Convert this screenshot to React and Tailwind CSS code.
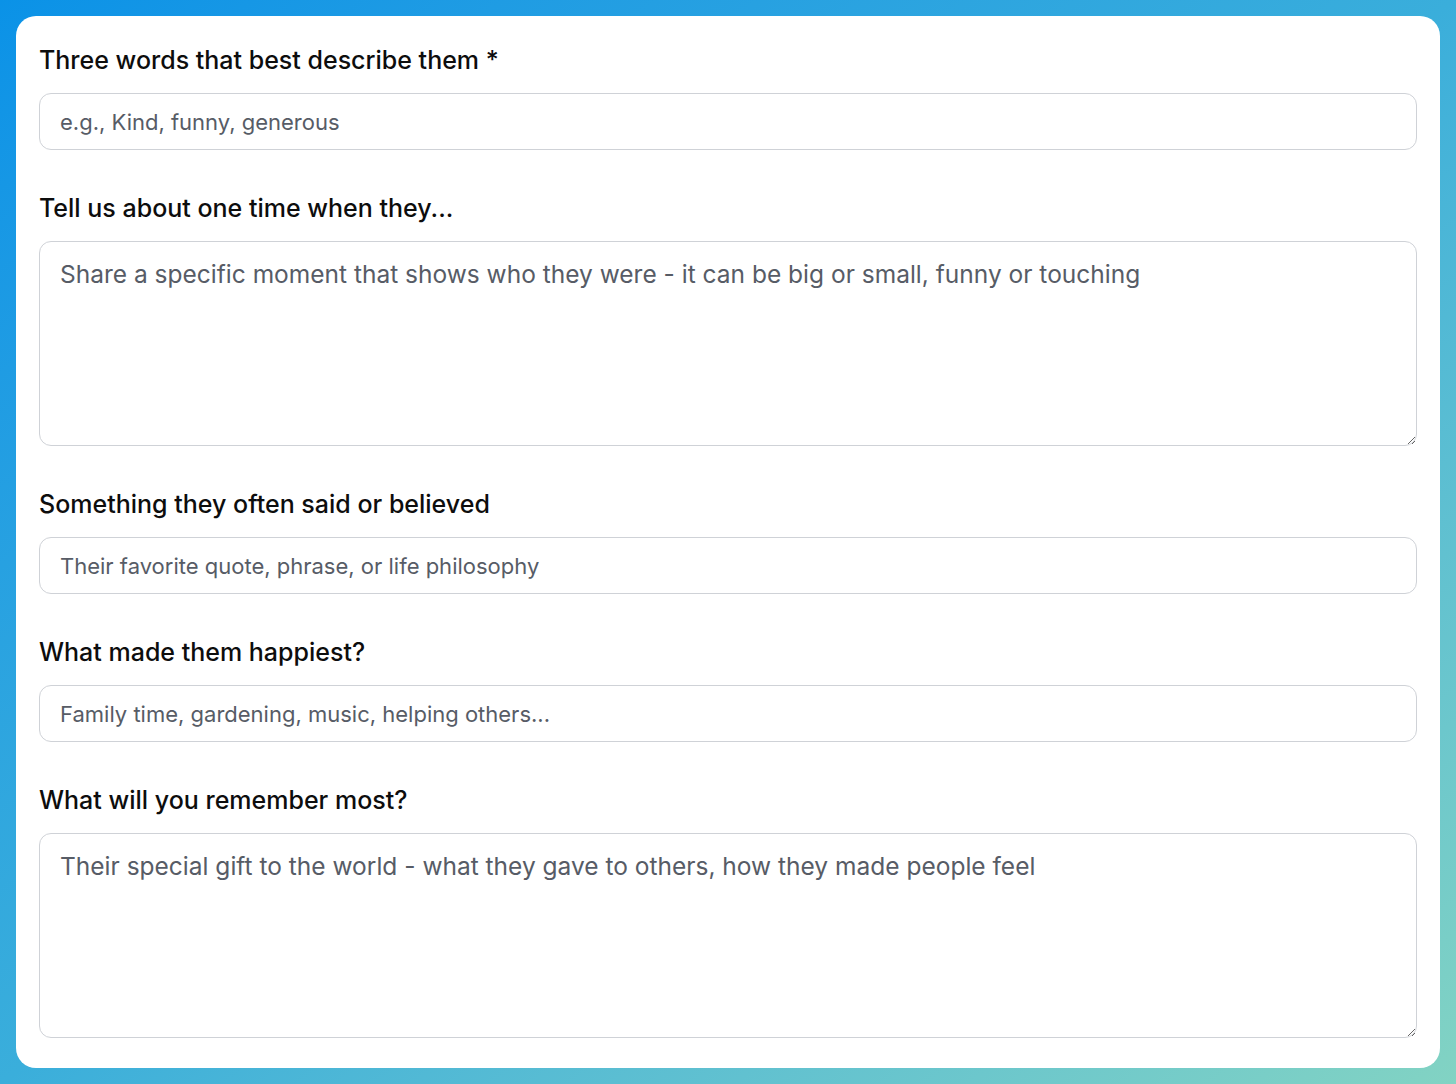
const FIELDS = [
  { label: "Three words that best describe them *", placeholder: "e.g., Kind, funny, generous", area: false },
  { label: "Tell us about one time when they...", placeholder: "Share a specific moment that shows who they were - it can be big or small, funny or touching", area: true },
  { label: "Something they often said or believed", placeholder: "Their favorite quote, phrase, or life philosophy", area: false },
  { label: "What made them happiest?", placeholder: "Family time, gardening, music, helping others...", area: false },
  { label: "What will you remember most?", placeholder: "Their special gift to the world - what they gave to others, how they made people feel", area: true },
];

export default function App() {
  return (
    <div
      className="min-h-[1084px] w-full bg-linear-to-br from-[#0a92e7] via-[#3aaedb] to-[#82d3c3] p-4"
      style={{ fontFamily: "Inter, 'Noto Sans', sans-serif" }}
    >
      <div className="flex h-[1052px] flex-col gap-[42px] rounded-[20px] bg-white px-[23px] pt-[28px] pb-[31px]">
        {FIELDS.map((f) => (
          <div key={f.label} className="flex flex-col gap-[17px]">
            <label className="text-[25px] leading-[32px] font-[450] text-[#0d0d0d]">{f.label}</label>
            {f.area ? (
              <textarea
                placeholder={f.placeholder}
                className="h-[205px] w-full resize-y rounded-[12px] border border-[#cfd2d7] px-[20px] pt-[14px] pb-[16px] text-[24.5px] leading-[36px] text-[#111] placeholder:text-[#575c66] outline-none"
              />
            ) : (
              <input
                placeholder={f.placeholder}
                className="h-[57px] w-full rounded-[12px] border border-[#cfd2d7] px-[20px] text-[22px] text-[#111] placeholder:text-[#575c66] outline-none"
              />
            )}
          </div>
        ))}
      </div>
    </div>
  );
}
